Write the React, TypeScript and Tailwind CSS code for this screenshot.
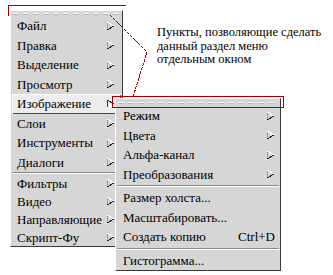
import * as React from "react";

type Item = { label: string; arrow?: boolean; shortcut?: string; active?: boolean };

const mainTop: Item[] = [
  { label: "Файл", arrow: true },
  { label: "Правка", arrow: true },
  { label: "Выделение", arrow: true },
  { label: "Просмотр", arrow: true },
  { label: "Изображение", arrow: true, active: true },
  { label: "Слои", arrow: true },
  { label: "Инструменты", arrow: true },
  { label: "Диалоги", arrow: true },
];

const mainBottom: Item[] = [
  { label: "Фильтры", arrow: true },
  { label: "Видео", arrow: true },
  { label: "Направляющие", arrow: true },
  { label: "Скрипт-Фу", arrow: true },
];

const subGroups: Item[][] = [
  [
    { label: "Режим", arrow: true },
    { label: "Цвета", arrow: true },
    { label: "Альфа-канал", arrow: true },
    { label: "Преобразования", arrow: true },
  ],
  [
    { label: "Размер холста..." },
    { label: "Масштабировать..." },
    { label: "Создать копию", shortcut: "Ctrl+D" },
  ],
  [{ label: "Гистограмма..." }],
];

const Arrow: React.FC<{ pressed?: boolean }> = ({ pressed }) => (
  <svg width="9" height="10" viewBox="0 0 9 10" shapeRendering="crispEdges">
    <line x1="1" y1="1" x2="1" y2="9" stroke={pressed ? "#303030" : "#9a9a9a"} />
    <line x1="1" y1="1" x2="8" y2="5" stroke={pressed ? "#303030" : "#ffffff"} />
    <line x1="8" y1="5" x2="1" y2="9" stroke={pressed ? "#ffffff" : "#202020"} />
  </svg>
);

const Tearoff: React.FC<{ h: string }> = ({ h }) => (
  <div className={`flex flex-col justify-center px-[2px] ${h}`}>
    <div className="h-[1px] bg-[repeating-linear-gradient(90deg,#ffffff_0_6px,transparent_6px_10px)]" />
    <div className="h-[1px] bg-[repeating-linear-gradient(90deg,#b8b8b8_0_6px,transparent_6px_10px)]" />
  </div>
);

const Separator: React.FC<{ pad?: boolean }> = ({ pad }) => (
  <div className={pad ? "py-[1px]" : ""}>
    <div className="mx-[1px] h-[1px] bg-[#8a8a8a]" />
    <div className="mx-[1px] h-[1px] bg-white" />
  </div>
);

const Row: React.FC<{ item: Item; h: string; pl: string; pr: string }> = ({ item, h, pl, pr }) => (
  <div
    className={`flex items-center justify-between whitespace-nowrap ${h} ${pl} ${pr} ${
      item.active
        ? "mx-[1px] bg-[#ececec] shadow-[inset_1px_1px_0_#ffffff,inset_-1px_-1px_0_#4a4a4a]"
        : ""
    }`}
  >
    <span>{item.label}</span>
    {item.arrow && <Arrow pressed={item.active} />}
    {item.shortcut && <span>{item.shortcut}</span>}
  </div>
);

export default function App() {
  return (
    <div className="relative w-[333px] h-[275px] overflow-hidden bg-white font-[family-name:'Liberation_Serif',serif] text-[13px] font-normal leading-none text-black">
      <div className="flex items-start pl-[10px] pt-[10px]">
        <div className="w-[113px] bg-[#d6d6d6] border border-t-white border-l-white border-r-[#3a3a3a] border-b-[#3a3a3a]">
          <Tearoff h="h-[5px]" />
          {mainTop.map((it) => (
            <Row key={it.label} item={it} h="h-[19.5px]" pl={it.active ? "pl-[5px]" : "pl-[6px]"} pr={it.active ? "pr-[6px]" : "pr-[7px]"} />
          ))}
          <Separator />
          {mainBottom.map((it) => (
            <Row key={it.label} item={it} h="h-[18px]" pl="pl-[6px]" pr="pr-[7px]" />
          ))}
        </div>
        <p className="ml-[34px] mt-[16px] whitespace-nowrap text-[12.5px] leading-[13.5px]">
          Пункты, позволяющие сделать
          <br />
          данный раздел меню
          <br />
          отдельным окном
        </p>
      </div>

      <div className="absolute left-[115px] top-[98px] w-[166px] bg-[#d6d6d6] border border-t-white border-l-white border-r-[#3a3a3a] border-b-[#3a3a3a]">
        <Tearoff h="h-[7px]" />
        {subGroups.map((group, gi) => (
          <React.Fragment key={gi}>
            {gi > 0 && <Separator pad />}
            {group.map((it) => (
              <Row key={it.label} item={it} h="h-[19.5px]" pl="pl-[7px]" pr="pr-[5px]" />
            ))}
          </React.Fragment>
        ))}
      </div>

      <svg className="pointer-events-none absolute inset-0" width="333" height="275" shapeRendering="crispEdges">
        <path d="M8.5 16 V5.5 H126" fill="none" stroke="#a40000" />
        <rect x="112.5" y="96.5" width="171" height="11" fill="none" stroke="#a40000" />
        <polyline points="110,15 147,52 133,97" fill="none" stroke="#a40000" strokeDasharray="3 1" />
      </svg>
    </div>
  );
}
